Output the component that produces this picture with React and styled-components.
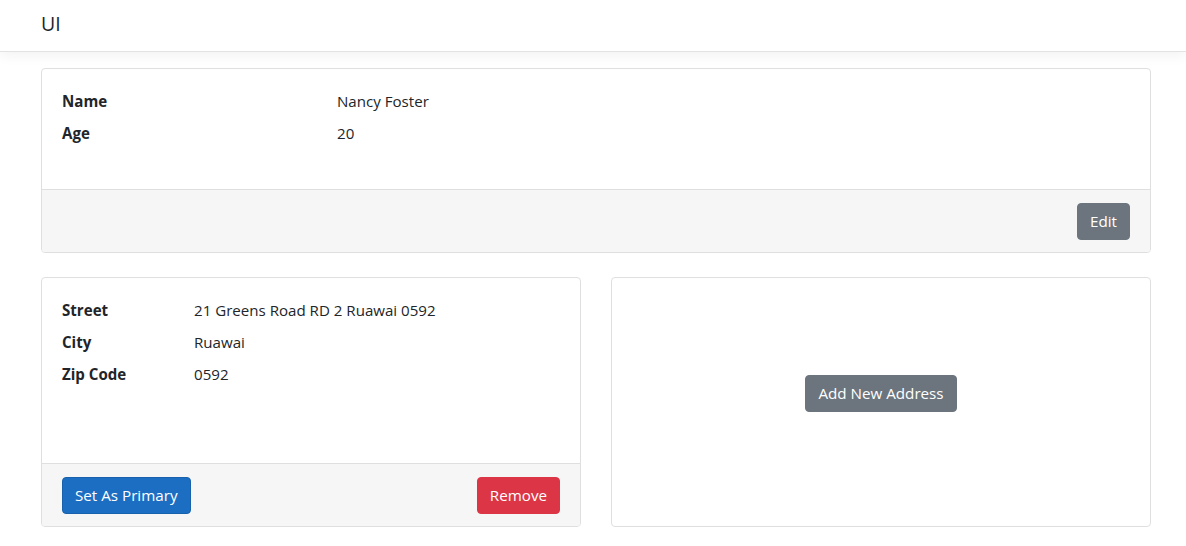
import React from "react";
import styled, { createGlobalStyle } from "styled-components";

const Global = createGlobalStyle`
  html, body { margin: 0; padding: 0; background: #fff; }
  body {
    font-family: "Open Sans", "Noto Sans", sans-serif;
    font-size: 15.1px;
    line-height: 24px;
    color: #212529;
  }
  * { box-sizing: border-box; }
`;

const Header = styled.header`
  height: 52px;
  border-bottom: 1px solid #e3e3e3;
  box-shadow: 0 4px 12px rgba(0, 0, 0, 0.05);
  margin-bottom: 16px;
  display: flex;
  align-items: center;
  padding: 0 41px;
`;

const Brand = styled.div`
  font-size: 19.5px;
  color: #212529;
  margin-top: -4px;
`;

const Container = styled.main`
  width: 1110px;
  margin: 0 0 0 41px;
  display: flex;
  flex-direction: column;
  gap: 24px;
`;

const Card = styled.section`
  border: 1px solid #dfdfdf;
  border-radius: 4px;
  background: #fff;
  display: flex;
  flex-direction: column;
  height: ${(p) => p.$h}px;
  overflow: hidden;
`;

const CardBody = styled.div`
  flex: 1;
  padding: 20px 20px;
`;

const CardFooter = styled.div`
  height: 63px;
  background: #f6f6f6;
  border-top: 1px solid #dfdfdf;
  display: flex;
  align-items: center;
  justify-content: ${(p) => p.$justify || "flex-end"};
  padding: 0 20px;
`;

const Row = styled.div`
  display: grid;
  grid-template-columns: ${(p) => p.$label}px 1fr;
  height: 32px;
  align-items: start;
`;

const Label = styled.div`
  font-weight: 700;
`;

const Value = styled.div``;

const Btn = styled.button`
  font-family: inherit;
  font-size: 15.2px;
  line-height: 24px;
  height: 37px;
  padding: 0 12px;
  border-radius: 4px;
  color: #fff;
  background: ${(p) => p.$bg};
  border: 1px solid ${(p) => p.$border};
  cursor: pointer;
`;

const Columns = styled.div`
  display: grid;
  grid-template-columns: 540px 540px;
  column-gap: 30px;
`;

const CenterCard = styled(Card)`
  align-items: center;
  justify-content: center;
  padding-bottom: 18px;
`;

const colors = {
  secondary: ["#6c757d", "#6c757d"],
  primary: ["#1b6ec2", "#1861ac"],
  danger: ["#dc3545", "#dc3545"],
};

const Button = ({ variant, children }) => (
  <Btn $bg={colors[variant][0]} $border={colors[variant][1]}>
    {children}
  </Btn>
);

export default function App() {
  return (
    <>
      <Global />
      <Header>
        <Brand>UI</Brand>
      </Header>
      <Container>
        <Card $h={185}>
          <CardBody>
            <Row $label={275}>
              <Label>Name</Label>
              <Value>Nancy Foster</Value>
            </Row>
            <Row $label={275}>
              <Label>Age</Label>
              <Value>20</Value>
            </Row>
          </CardBody>
          <CardFooter>
            <Button variant="secondary">Edit</Button>
          </CardFooter>
        </Card>
        <Columns>
          <Card $h={250}>
            <CardBody>
              <Row $label={132}>
                <Label>Street</Label>
                <Value>21 Greens Road RD 2 Ruawai 0592</Value>
              </Row>
              <Row $label={132}>
                <Label>City</Label>
                <Value>Ruawai</Value>
              </Row>
              <Row $label={132}>
                <Label>Zip Code</Label>
                <Value>0592</Value>
              </Row>
            </CardBody>
            <CardFooter $justify="space-between">
              <Button variant="primary">Set As Primary</Button>
              <Button variant="danger">Remove</Button>
            </CardFooter>
          </Card>
          <CenterCard $h={250}>
            <Button variant="secondary">Add New Address</Button>
          </CenterCard>
        </Columns>
      </Container>
    </>
  );
}
